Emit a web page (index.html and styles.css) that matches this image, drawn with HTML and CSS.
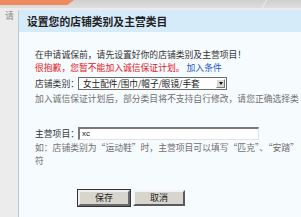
FILE: index.html
```html
<!DOCTYPE html>
<html>
<head>
<meta charset="utf-8">
<link rel="stylesheet" href="styles.css">
</head>
<body>
<div class="page">
  <div class="topbar"><div class="tab"></div><div class="tabline"></div></div>
  <div class="under">请</div>
</div>
<div class="dialog">
  <div class="dlg-head">设置您的店铺类别及主营类目</div>
  <div class="dlg-body">
    <div class="line">在申请诚保前，请先设置好你的店铺类别及主营项目！</div>
    <div class="line"><span class="red">很抱歉，您暂不能加入诚信保证计划。</span><span class="link">加入条件</span></div>
    <div class="row">
      <span class="label">店铺类别：</span>
      <div class="select"><span class="sel-text">女士配件/围巾/帽子/眼镜/手套</span><span class="sel-btn"><span class="tri"></span></span></div>
    </div>
    <div class="line gray">加入诚信保证计划后，部分类目将不支持自行修改，请您正确选择类</div>
    <div class="row row2">
      <span class="label">主营项目：</span>
      <div class="input">xc</div>
    </div>
    <div class="line gray">如：店铺类别为“运动鞋”时，主营项目可以填写“匹克”、“安踏”</div>
    <div class="line gray">符</div>
    <div class="buttons">
      <div class="btn default">保存</div>
      <div class="btn">取消</div>
    </div>
  </div>
</div>
</body>
</html>
```
FILE: styles.css
```css
html, body {
  margin: 0;
  padding: 0;
  width: 301px;
  height: 217px;
  overflow: hidden;
}
body {
  position: relative;
  background: #ececec;
  font-family: "Noto Sans CJK SC", "Noto Sans", sans-serif;
  font-size: 8.8px;
  color: #333;
}
.page {
  display: flex;
  flex-direction: column;
}
.topbar {
  height: 8px;
  background: linear-gradient(#cfcfcf, #dedede);
  position: relative;
}
.tab {
  width: 74px;
  height: 5px;
  background: #ee8a5e;
  clip-path: polygon(0 0, 100% 0, 91% 100%, 0 100%);
}
.tabline {
  position: absolute;
  left: 264px;
  top: 0;
  width: 1px;
  height: 8px;
  background: #ececec;
  transform: skewX(-30deg);
}
.under {
  padding: 2px 0 0 5px;
  line-height: 12px;
  color: #8a8a8a;
  white-space: nowrap;
}
.dialog {
  position: absolute;
  left: 18px;
  top: 10px;
  right: 0;
  bottom: 0;
  border-left: 1px solid #b9c9d6;
  background: #f6fbfe;
  display: flex;
  flex-direction: column;
  overflow: hidden;
}
.dlg-head {
  height: 22px;
  line-height: 22px;
  background: #d5ebfa;
  padding-left: 8px;
  font-size: 10.8px;
  font-weight: bold;
  color: #222;
  white-space: nowrap;
}
.dlg-body {
  padding: 16px 0 0 16px;
  display: flex;
  flex-direction: column;
  white-space: nowrap;
}
.line {
  line-height: 13px;
  height: 13px;
}
.red { color: #e5141b; }
.link { color: #2457c5; margin-left: 2px; }
.gray { color: #6f6f6f; }
.row {
  display: flex;
  align-items: center;
  height: 18px;
}
.row2 {
  height: 16px;
  margin-top: 20px;
}
.label {
  width: 43px;
  color: #333;
}
.select {
  width: 147px;
  height: 11px;
  border: 1px solid #6b6b6b;
  background: #fff;
  display: flex;
  align-items: center;
  justify-content: space-between;
}
.sel-text {
  padding-left: 4px;
  color: #222;
  font-size: 8.6px;
  line-height: 11px;
}
.sel-btn {
  width: 9px;
  height: 9px;
  margin-right: 1px;
  background: #dcdad5;
  border: 1px solid;
  border-color: #fff #777 #777 #fff;
  box-sizing: border-box;
  display: flex;
  align-items: center;
  justify-content: center;
}
.tri {
  width: 0;
  height: 0;
  border-left: 2.5px solid transparent;
  border-right: 2.5px solid transparent;
  border-top: 3px solid #111;
}
.input {
  width: 176px;
  height: 10px;
  border: 1px solid;
  border-width: 2px 1px 1px 2px;
  border-color: #7a7a7a #e2e2e2 #e2e2e2 #7a7a7a;
  background: #fff;
  font-family: "Liberation Sans", sans-serif;
  font-size: 8px;
  line-height: 10px;
  padding-left: 2px;
  color: #222;
}
.buttons {
  display: flex;
  gap: 3px;
  margin: 23px 0 0 43px;
}
.btn {
  width: 48px;
  height: 12px;
  line-height: 12px;
  text-align: center;
  background: #d8d5cf;
  border: 2px solid;
  border-color: #f4f4f4 #5a5a5a #5a5a5a #f4f4f4;
  color: #222;
  font-size: 9px;
}
.btn.default {
  outline: 1px solid #333;
  outline-offset: 0;
  border-color: #efefef #6a6a6a #6a6a6a #efefef;
}
```
